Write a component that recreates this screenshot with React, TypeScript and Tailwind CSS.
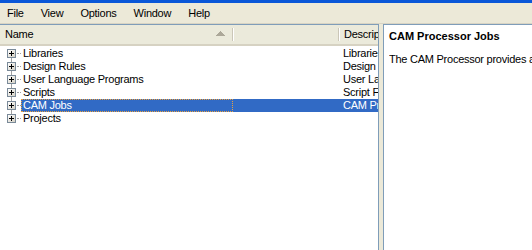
import React from "react"

const items = [
  { name: "Libraries", desc: "Libraries" },
  { name: "Design Rules", desc: "Design Rules" },
  { name: "User Language Programs", desc: "User Language Programs" },
  { name: "Scripts", desc: "Script Files" },
  { name: "CAM Jobs", desc: "CAM Processor Jobs" },
  { name: "Projects", desc: "" },
]

function PlusBox() {
  return (
    <span className="absolute left-[7px] top-[2px] w-[9px] h-[9px] border border-[#7a8a99] bg-gradient-to-br from-white to-[#d4d0c4] flex items-center justify-center">
      <svg width="7" height="7" viewBox="0 0 7 7" shapeRendering="crispEdges">
        <rect x="1" y="3" width="5" height="1" fill="#000" />
        <rect x="3" y="1" width="1" height="5" fill="#000" />
      </svg>
    </span>
  )
}

export default function App() {
  return (
    <div
      className="w-[532px] h-[250px] overflow-hidden bg-white flex flex-col text-[11px] leading-[13px] tracking-[-0.25px] text-black"
      style={{ fontFamily: '"Liberation Sans", Arial, sans-serif' }}
    >
      {/* title bar remnant */}
      <div className="h-[3px] bg-[#0a57d8] shrink-0" />

      {/* Menu bar */}
      <div className="h-[20px] bg-[#ece9d8] flex items-center shrink-0 pl-[7px] gap-[17px]">
        <span>File</span>
        <span>View</span>
        <span>Options</span>
        <span>Window</span>
        <span>Help</span>
      </div>
      <div className="h-[1px] bg-[#d8d4c4] shrink-0" />

      <div className="flex flex-1 min-h-0 bg-[#ece9d8]">
        {/* Left pane - tree list */}
        <div className="w-[379px] shrink-0 flex flex-col bg-white border-t border-r border-[#7f9db9] overflow-hidden">
          {/* Column header */}
          <div className="h-[21px] bg-[#ebeadb] border-b-[2px] border-[#d6d2c2] flex items-stretch shrink-0">
            <div className="w-[232px] shrink-0 relative flex items-center pl-[5px]">
              <span>Name</span>
              <svg className="absolute left-[216px] top-[6px]" width="9" height="5" viewBox="0 0 9 5" shapeRendering="crispEdges">
                <polygon points="4.5,0 9,5 0,5" fill="#aca899" />
              </svg>
            </div>
            <div className="w-[2px] shrink-0 my-[3px] border-l border-[#cbc7b8] bg-white" />
            <div className="w-[104px] shrink-0" />
            <div className="w-[2px] shrink-0 my-[3px] border-l border-[#cbc7b8] bg-white" />
            <div className="flex-1 min-w-0 flex items-center pl-[4px] overflow-hidden whitespace-nowrap">Description</div>
          </div>

          {/* Rows */}
          <div className="pt-[1px]">
            {items.map((item, i) => {
              const selected = item.name === "CAM Jobs"
              return (
                <div key={item.name} className="h-[13px] flex items-stretch relative">
                  {/* tree lines */}
                  {i > 0 && <span className="absolute left-[11px] top-0 h-[2px] border-l border-dotted border-[#a0a0a0]" />}
                  {i < items.length - 1 && <span className="absolute left-[11px] top-[11px] h-[2px] border-l border-dotted border-[#a0a0a0]" />}
                  <span className="absolute left-[17px] top-[6px] w-[4px] border-t border-dotted border-[#a0a0a0]" />
                  <PlusBox />
                  <div className={`ml-[21px] flex flex-1 min-w-0 ${selected ? "bg-[#316ac5] text-white" : ""}`}>
                    <div
                      className={`w-[212px] shrink-0 flex items-center pl-[2px] whitespace-nowrap overflow-hidden ${
                        selected ? "outline outline-1 outline-dotted outline-[#e8a040] -outline-offset-1" : ""
                      }`}
                    >
                      {item.name}
                    </div>
                    <div className="w-[108px] shrink-0" />
                    <div className="flex-1 min-w-0 flex items-center pl-[2px] whitespace-nowrap overflow-hidden">{item.desc}</div>
                  </div>
                </div>
              )
            })}
          </div>
        </div>

        {/* Splitter */}
        <div className="w-[4px] shrink-0 bg-[#ece9d8]" />

        {/* Right pane - description */}
        <div className="flex-1 min-w-0 bg-white border-t border-l border-[#7f9db9] pl-[5px] pt-[5px] overflow-hidden whitespace-nowrap">
          <div className="font-bold tracking-normal">CAM Processor Jobs</div>
          <div className="mt-[10px] overflow-hidden">The CAM Processor provides a</div>
        </div>
      </div>
    </div>
  )
}
